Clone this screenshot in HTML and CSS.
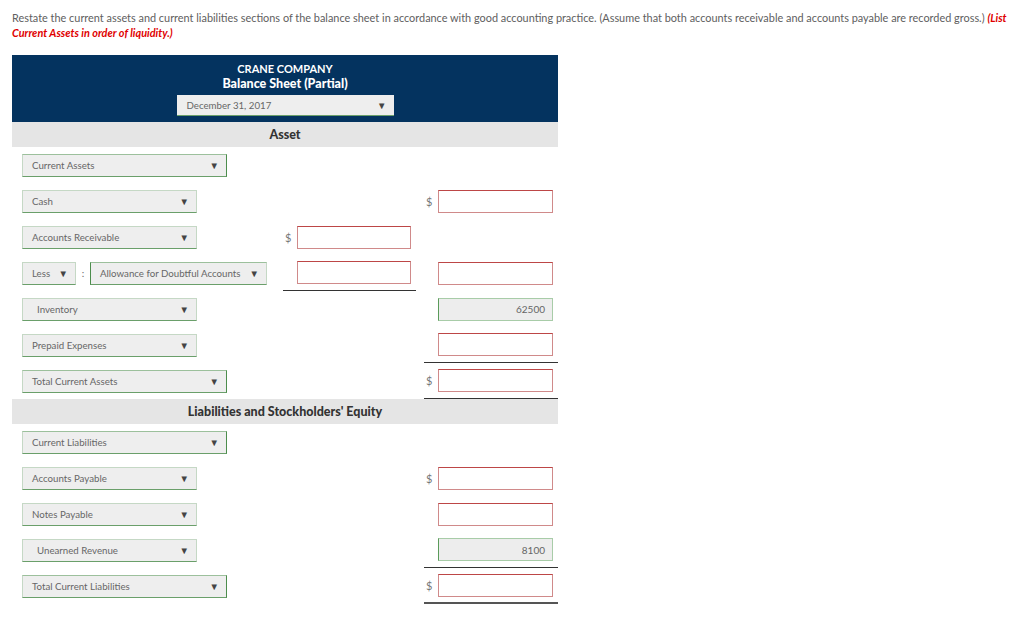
FILE: index.html
```html
<!DOCTYPE html>
<html>
<head>
<meta charset="utf-8">
<link rel="stylesheet" href="styles.css">
</head>
<body>
<p class="intro">Restate the current assets and current liabilities sections of the balance sheet in accordance with good accounting practice. (Assume that both accounts receivable and accounts payable are recorded gross.) <em class="hint">(List</em> <em class="hint">Current Assets in order of liquidity.)</em></p>

<div class="sheet">
  <div class="head">
    <div class="company">CRANE COMPANY</div>
    <div class="title">Balance Sheet (Partial)</div>
    <div class="select date"><span>December 31, 2017</span><span class="arr">▼</span></div>
  </div>
  <div class="band">Asset</div>

  <div class="row">
    <div class="label"><div class="select wide strong"><span>Current Assets</span><span class="arr">▼</span></div></div>
    <div class="c1"></div><div class="gap"></div><div class="c2"></div>
  </div>
  <div class="row">
    <div class="label"><div class="select mid"><span>Cash</span><span class="arr">▼</span></div></div>
    <div class="c1"></div><div class="gap"></div>
    <div class="c2"><span class="dol">$</span><div class="input"></div></div>
  </div>
  <div class="row">
    <div class="label"><div class="select mid"><span>Accounts Receivable</span><span class="arr">▼</span></div></div>
    <div class="c1"><span class="dol">$</span><div class="input"></div></div><div class="gap"></div>
    <div class="c2"></div>
  </div>
  <div class="row">
    <div class="label">
      <div class="select less"><span>Less</span><span class="arr">▼</span></div>
      <span class="colon">:</span>
      <div class="select allow"><span>Allowance for Doubtful Accounts</span><span class="arr">▼</span></div>
    </div>
    <div class="c1 rule"><span class="dol"></span><div class="input"></div></div><div class="gap"></div>
    <div class="c2"><span class="dol"></span><div class="input"></div></div>
  </div>
  <div class="row">
    <div class="label"><div class="select mid indent"><span>Inventory</span><span class="arr">▼</span></div></div>
    <div class="c1"></div><div class="gap"></div>
    <div class="c2"><span class="dol"></span><div class="input ok">62500</div></div>
  </div>
  <div class="row">
    <div class="label"><div class="select mid"><span>Prepaid Expenses</span><span class="arr">▼</span></div></div>
    <div class="c1"></div><div class="gap"></div>
    <div class="c2 rule"><span class="dol"></span><div class="input"></div></div>
  </div>
  <div class="row">
    <div class="label"><div class="select wide strong"><span>Total Current Assets</span><span class="arr">▼</span></div></div>
    <div class="c1"></div><div class="gap"></div>
    <div class="c2 rule"><span class="dol">$</span><div class="input"></div></div>
  </div>

  <div class="band">Liabilities and Stockholders' Equity</div>

  <div class="row">
    <div class="label"><div class="select wide strong"><span>Current Liabilities</span><span class="arr">▼</span></div></div>
    <div class="c1"></div><div class="gap"></div><div class="c2"></div>
  </div>
  <div class="row">
    <div class="label"><div class="select mid"><span>Accounts Payable</span><span class="arr">▼</span></div></div>
    <div class="c1"></div><div class="gap"></div>
    <div class="c2"><span class="dol">$</span><div class="input"></div></div>
  </div>
  <div class="row">
    <div class="label"><div class="select mid"><span>Notes Payable</span><span class="arr">▼</span></div></div>
    <div class="c1"></div><div class="gap"></div>
    <div class="c2"><span class="dol"></span><div class="input"></div></div>
  </div>
  <div class="row">
    <div class="label"><div class="select mid indent"><span>Unearned Revenue</span><span class="arr">▼</span></div></div>
    <div class="c1"></div><div class="gap"></div>
    <div class="c2 rule"><span class="dol"></span><div class="input ok">8100</div></div>
  </div>
  <div class="row">
    <div class="label"><div class="select wide strong"><span>Total Current Liabilities</span><span class="arr">▼</span></div></div>
    <div class="c1"></div><div class="gap"></div>
    <div class="c2 rule2"><span class="dol">$</span><div class="input"></div></div>
  </div>
</div>
</body>
</html>
```
FILE: styles.css
```css
html, body {
  margin: 0;
  padding: 0;
  background: #fff;
}
body {
  padding: 10px 4px 0 12px;
  font-family: Lato, "Liberation Sans", sans-serif;
  color: #555;
}
.intro {
  margin: 0;
  font-size: 10.9px;
  line-height: 15px;
  color: #606060;
}
.hint {
  color: #e00000;
  font-weight: bold;
  font-style: italic;
}
.sheet {
  margin-top: 15px;
  width: 546px;
}
.head {
  background: #04335f;
  height: 67px;
  display: flex;
  flex-direction: column;
  align-items: center;
  padding-top: 7px;
  box-sizing: border-box;
  color: #fff;
  font-weight: bold;
}
.company {
  font-size: 11px;
  line-height: 13px;
}
.title {
  font-size: 12.5px;
  line-height: 16px;
  margin-top: 1px;
  font-weight: 900;
}
.band {
  background: #e5e5e5;
  height: 25px;
  display: flex;
  align-items: center;
  justify-content: center;
  font-weight: 900;
  font-size: 12.5px;
  color: #333;
}
.select {
  box-sizing: border-box;
  height: 23px;
  background: #eeeeee;
  border: 1px solid #c5d8c5;
  border-bottom: 1px solid #6a9f6a;
  display: flex;
  align-items: center;
  justify-content: space-between;
  padding: 0 7px 0 9px;
  font-size: 9.7px;
  font-weight: normal;
  color: #666;
}
.select .arr {
  font-size: 9.5px;
  color: #444;
}
.date {
  width: 217px;
  height: 21px;
  margin-top: 3px;
  border: none;
  border-bottom: 1px solid #6a9f6a;
  padding-left: 10px;
}
.wide { width: 205px; }
.strong { border-right-color: #4c8d4c; border-top-color: #9cc09c; }
.mid { width: 175px; }
.indent { padding-left: 14px; }
.less { width: 54px; }
.allow { width: 177px; border-left-color: #4c8d4c; border-top-color: #9cc09c; }
.colon {
  font-size: 10px;
  width: 14px;
  text-align: center;
  color: #666;
}
.row {
  display: flex;
  height: 36px;
}
.label {
  width: 271px;
  box-sizing: border-box;
  padding-left: 10px;
  display: flex;
  align-items: center;
}
.c1 {
  width: 133px;
  box-sizing: border-box;
  display: flex;
  align-items: center;
  padding-right: 5px;
}
.gap { width: 8px; }
.c2 {
  width: 134px;
  box-sizing: border-box;
  display: flex;
  align-items: center;
  padding-right: 5px;
}
.rule { border-bottom: 1px solid #333; }
.rule2 { border-bottom: 2px solid #555; }
.dol {
  width: 14px;
  flex: none;
  font-size: 11px;
  color: #777;
  padding-left: 2px;
  box-sizing: border-box;
}
.input {
  flex: 1;
  height: 23px;
  box-sizing: border-box;
  border: 1px solid #d08a8a;
  border-top-color: #bd4646;
  background: #fff;
  font-size: 10px;
  color: #666;
  display: flex;
  align-items: center;
  justify-content: flex-end;
  padding-right: 7px;
}
.input.ok {
  background: #ededed;
  border: 1px solid #a8cca8;
  border-left-color: #5b9b5b;
}
```
